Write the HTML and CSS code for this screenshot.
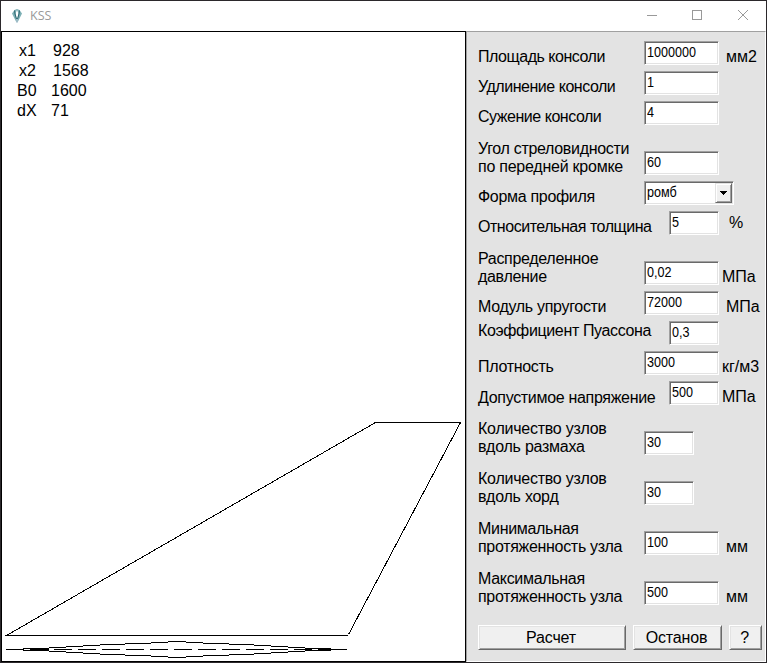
FILE: index.html
```html
<!DOCTYPE html>
<html lang="ru">
<head>
<meta charset="utf-8">
<title>KSS</title>
<link rel="stylesheet" href="styles.css">
</head>
<body>
<div class="window">
  <header class="titlebar">
    <svg class="logo" width="12" height="16" viewBox="0 0 12 16">
      <path d="M3.500 2L6 1l2.500 1L11 5.500 6.500 14.500h-1L1 5.500z" fill="#7db0b5"/>
      <path d="M4.700 5L6 2l1.300 3L6.500 10h-1z" fill="#fff"/>
      <path d="M3.500 2.500L4 6l1.500 5M8.500 2.500L8 6l-1.500 5" fill="none" stroke="#2f6872"/>
      <path d="M5.500 11h1v3.500h-1z" fill="#b9c3d6"/>
    </svg>
    <span class="title">KSS</span>
    <svg class="controls" width="102" height="12" viewBox="0 0 102 12" shape-rendering="crispEdges">
      <path d="M0 5.500h10M45.500 .5h9v9h-9z"/>
      <path d="M91 0l10 10M101 0L91 10" shape-rendering="auto"/>
    </svg>
  </header>
  <main class="body">
    <section class="canvas">
      <ul class="readout">
        <li class="wide"><span>x1</span>928</li>
        <li class="wide"><span>x2</span>1568</li>
        <li><span>B0</span>1600</li>
        <li><span>dX</span>71</li>
      </ul>
      <svg class="drawing" width="463" height="250" viewBox="2 411 463 250" shape-rendering="crispEdges">
        <path d="M348.500 634.500L460.500 422.500H375.500L6.500 635.500H348"/>
        <path class="dash" d="M6 649.500H347"/>
        <path d="M331 649.500H347M30 649.500H49"/>
        <path d="M23 648.500H49M49 647.500H66M66 646.500H83M83 645.500H100M100 644.500H125M125 643.500H151M151 642.500H168M168 641.500H186M186 642.500H203M203 643.500H229M229 644.500H254M254 645.500H271M271 646.500H288M288 647.500H305M305 648.500H331"/>
        <path d="M23 650.500H49M49 651.500H66M66 652.500H83M83 653.500H100M100 654.500H125M125 655.500H151M151 656.500H168M168 657.500H186M186 656.500H203M203 655.500H229M229 654.500H254M254 653.500H271M271 652.500H288M288 651.500H305M305 650.500H331"/>
      </svg>
    </section>
    <form class="panel">
      <div class="row"><label class="tight">Площадь консоли</label><div class="field"><span>1000000</span></div><b class="unit far">мм2</b></div>
      <div class="row"><label class="tight">Удлинение консоли</label><div class="field"><span>1</span></div></div>
      <div class="row"><label class="tight">Сужение консоли</label><div class="field"><span>4</span></div></div>
      <div class="row tall"><label>Угол стреловидности<br><span class="loose">по передней кромке</span></label><div class="field"><span>60</span></div></div>
      <div class="row"><label>Форма профиля</label><div class="field combo"><span>ромб</span><i class="drop"><svg width="7" height="4" viewBox="0 0 7 4" shape-rendering="crispEdges"><path d="M0 0h7v1H6v1H5v1H4v1H3V3H2V2H1V1H0z"/></svg></i></div></div>
      <div class="row"><label class="tight">Относительная толщина</label><div class="field short"><span>5</span></div><b class="unit percent">%</b></div>
      <div class="row tall"><label>Распределенное<br>давление</label><div class="field"><span>0,02</span></div><b class="unit">МПа</b></div>
      <div class="row"><label>Модуль упругости</label><div class="field"><span>72000</span></div><b class="unit far">МПа</b></div>
      <div class="row"><label class="raised">Коэффициент Пуассона</label><div class="field short"><span>0,3</span></div></div>
      <div class="row"><label>Плотность</label><div class="field"><span>3000</span></div><b class="unit">кг/м3</b></div>
      <div class="row"><label class="lowered">Допустимое напряжение</label><div class="field short"><span>500</span></div><b class="unit">МПа</b></div>
      <div class="row tall"><label class="loose">Количество узлов<br>вдоль размаха</label><div class="field narrow"><span>30</span></div></div>
      <div class="row tall"><label class="loose">Количество узлов<br>вдоль хорд</label><div class="field narrow"><span>30</span></div></div>
      <div class="row tall"><label>Минимальная<br>протяженность узла</label><div class="field"><span>100</span></div><b class="unit far">мм</b></div>
      <div class="row tall"><label>Максимальная<br>протяженность узла</label><div class="field"><span>500</span></div><b class="unit far">мм</b></div>
      <div class="buttons">
        <button type="button">Расчет</button>
        <button type="button">Останов</button>
        <button type="button">?</button>
      </div>
    </form>
  </main>
</div>
</body>
</html>
```
FILE: styles.css
```css
* { box-sizing: border-box; }
body {
  margin: 0;
  font: 16px/18px "Liberation Sans", Arial, sans-serif;
  color: #000;
}
.window {
  width: 767px;
  height: 663px;
  border: 1px solid #2b282b;
  background: #fff;
  overflow: hidden;
}
.titlebar {
  height: 30px;
  display: flex;
  align-items: center;
  padding: 0 17px 0 10px;
}
.logo { margin-right: 7px; }
.title {
  font: 12.5px/16px "Open Sans", sans-serif;
  color: #999;
  flex: 1;
}
.controls { fill: none; stroke: #999; }
.body {
  display: grid;
  grid-template-columns: 465px 300px;
  height: 631px;
}
.canvas {
  border: 1px solid #000;
  display: flex;
  flex-direction: column;
  justify-content: space-between;
}
.readout {
  list-style: none;
  margin: 0;
  padding: 9px 0 0 15px;
  line-height: 20px;
}
.readout li { display: flex; }
.readout span { width: 34px; }
.readout .wide { padding-left: 2px; }
.drawing { display: block; fill: none; stroke: #000; }
.dash { stroke-dasharray: 18 6; }
.panel {
  background: #e3e3e3;
  border: 1px solid;
  border-color: #a0a0a0 #fff #fff #a0a0a0;
  padding: 9px 0 0 11px;
}
.row {
  height: 30px;
  padding-bottom: 6px;
  display: flex;
  align-items: flex-end;
}
.tall { height: 50px; }
label {
  width: 166px;
  margin-bottom: -1px;
  white-space: nowrap;
  letter-spacing: -.31px;
}
.tight { letter-spacing: -.47px; }
.loose { letter-spacing: -.24px; }
.raised { margin-bottom: 5px; letter-spacing: -.36px; }
.lowered { margin-bottom: -2px; }
.field {
  width: 75px;
  height: 24px;
  background: #fff;
  border: 1px solid;
  border-color: #a0a0a0 #fff #fff #a0a0a0;
  box-shadow: inset 1px 1px #696969, inset -1px -1px #e3e3e3;
  padding: 1px 0 0 2px;
  font-size: 14px;
  line-height: 18px;
}
.field span {
  display: inline-block;
  transform: scaleX(.9);
  transform-origin: left;
}
.short { width: 50px; margin-left: 25px; }
.narrow { width: 50px; }
.combo {
  width: 90px;
  display: flex;
  justify-content: space-between;
  padding: 1px 1px 1px 2px;
}
.drop {
  width: 17px;
  background: #f0f0f0;
  border: 1px solid;
  border-color: #e3e3e3 #696969 #696969 #e3e3e3;
  box-shadow: inset 1px 1px #fff, inset -1px -1px #a0a0a0;
  display: grid;
  place-items: center;
}
.drop svg { display: block; }
.unit { font-weight: normal; margin: 0 0 -1px 3px; }
.far { margin-left: 7px; }
.percent { margin: 0 0 3px 10px; }
.buttons {
  display: grid;
  grid-template-columns: 148px 89px 33px;
  gap: 7px;
  padding-top: 14px;
}
button {
  height: 25px;
  padding: 0 2px 0 0;
  font: inherit;
  letter-spacing: -.15px;
  color: inherit;
  background: #f0f0f0;
  border: 1px solid;
  border-color: #fff #696969 #696969 #fff;
  box-shadow: inset 1px 1px #e3e3e3, inset -1px -1px #a0a0a0;
}
```
